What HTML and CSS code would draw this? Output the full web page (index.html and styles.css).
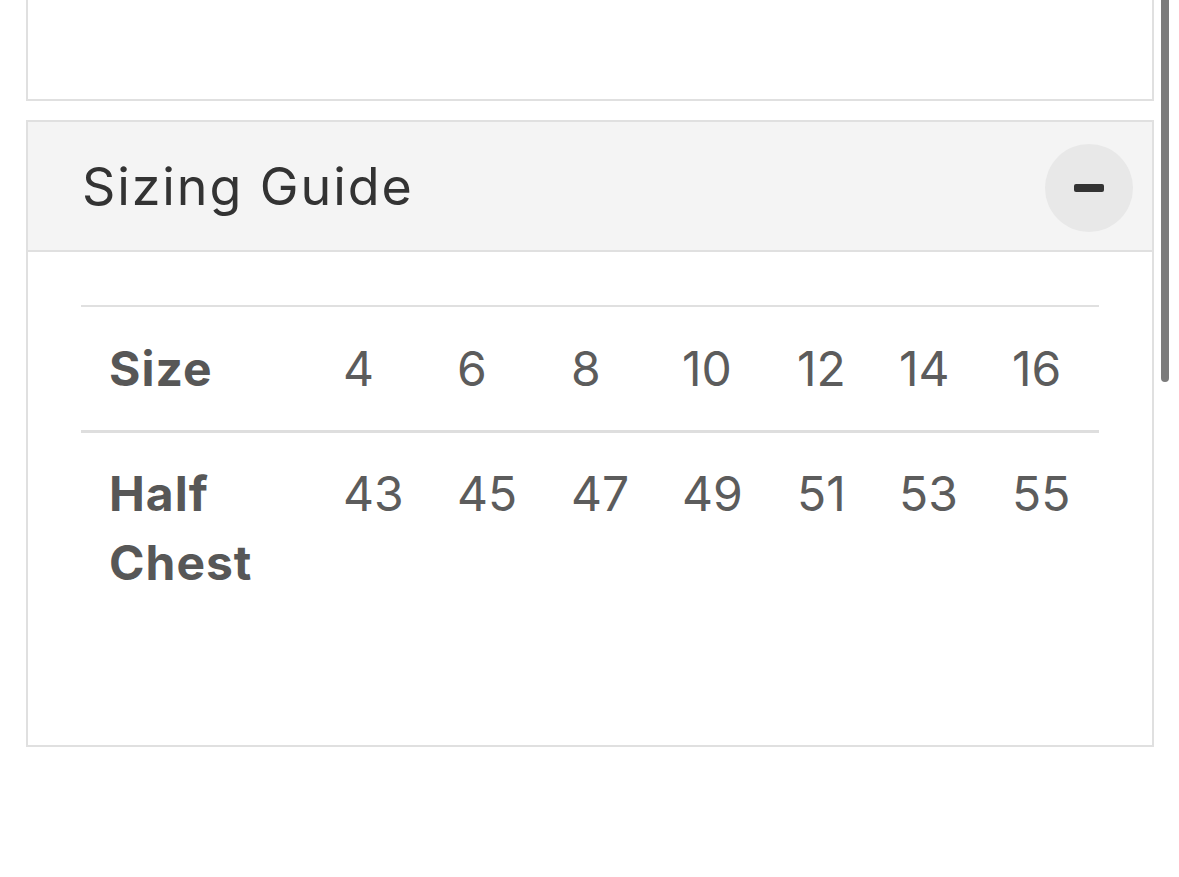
FILE: index.html
```html
<!DOCTYPE html>
<html lang="en">
<head>
<meta charset="utf-8">
<title>Sizing Guide</title>
<link rel="stylesheet" href="styles.css">
</head>
<body>
<main class="page">
  <section class="panel panel-top"></section>
  <section class="panel accordion">
    <header class="acc-head">
      <h2 class="acc-title">Sizing Guide</h2>
      <button class="acc-toggle" aria-label="Collapse"><span class="minus"></span></button>
    </header>
    <div class="acc-body">
      <table class="size-table">
        <colgroup>
          <col class="c-label"><col class="c-a"><col class="c-a"><col class="c-b"><col class="c-c"><col class="c-d"><col class="c-e"><col class="c-f">
        </colgroup>
        <thead>
          <tr>
            <th>Size</th><td>4</td><td>6</td><td>8</td><td>10</td><td>12</td><td>14</td><td>16</td>
          </tr>
        </thead>
        <tbody>
          <tr>
            <th>Half Chest</th><td>43</td><td>45</td><td>47</td><td>49</td><td>51</td><td>53</td><td>55</td>
          </tr>
        </tbody>
      </table>
    </div>
  </section>
</main>
<div class="scrollbar"></div>
</body>
</html>
```

FILE: styles.css
```css
html, body {
  margin: 0;
  padding: 0;
  background: #ffffff;
}

body {
  font-family: Inter, "Noto Sans", sans-serif;
  color: #333333;
  overflow: hidden;
}

.page {
  width: 1128px;
  padding-left: 26px;
  display: flex;
  flex-direction: column;
  gap: 19px;
}

.panel {
  border: 2px solid #e0e0e0;
  box-sizing: border-box;
}

.panel-top {
  border-top: none;
  height: 101px;
}

.accordion {
  height: 627px;
  display: flex;
  flex-direction: column;
}

.acc-head {
  background: #f4f4f4;
  border-bottom: 2px solid #e0e0e0;
  display: flex;
  align-items: center;
  justify-content: space-between;
  padding: 0 19px 0 54px;
  box-sizing: border-box;
  height: 130px;
}

.acc-title {
  margin: 0;
  font-size: 52px;
  font-weight: 400;
  color: #333333;
  letter-spacing: 1.9px;
}

.acc-toggle {
  width: 88px;
  height: 88px;
  margin-top: 4px;
  border-radius: 50%;
  border: none;
  background: #e8e8e8;
  display: flex;
  align-items: center;
  justify-content: center;
  padding: 0;
}

.minus {
  display: block;
  width: 30px;
  height: 8px;
  border-radius: 2px;
  background: #333333;
}

.acc-body {
  padding: 53px 53px 0 53px;
}

.size-table {
  width: 1018px;
  table-layout: fixed;
  border-collapse: collapse;
  border-top: 2px solid #e0e0e0;
  font-size: 48px;
  line-height: 69px;
}

.c-label { width: 234px; }
.c-a { width: 114px; }
.c-b { width: 111px; }
.c-c { width: 115px; }
.c-d { width: 102px; }
.c-e { width: 113px; }
.c-f { width: 115px; }

.size-table th,
.size-table td {
  text-align: left;
  vertical-align: top;
  padding: 27px 0 27px 28px;
}

.size-table th {
  font-weight: 700;
  color: #575757;
  letter-spacing: 1px;
}

.size-table td {
  font-weight: 400;
  color: #5c5c5c;
}

.size-table thead tr {
  border-bottom: 3px solid #dedede;
}

.size-table tbody th,
.size-table tbody td {
  padding-top: 26px;
}

.scrollbar {
  position: fixed;
  top: 0;
  left: 1161px;
  width: 8px;
  height: 382px;
  background: #7b7b7b;
  border-radius: 0 0 4px 4px;
}
```
